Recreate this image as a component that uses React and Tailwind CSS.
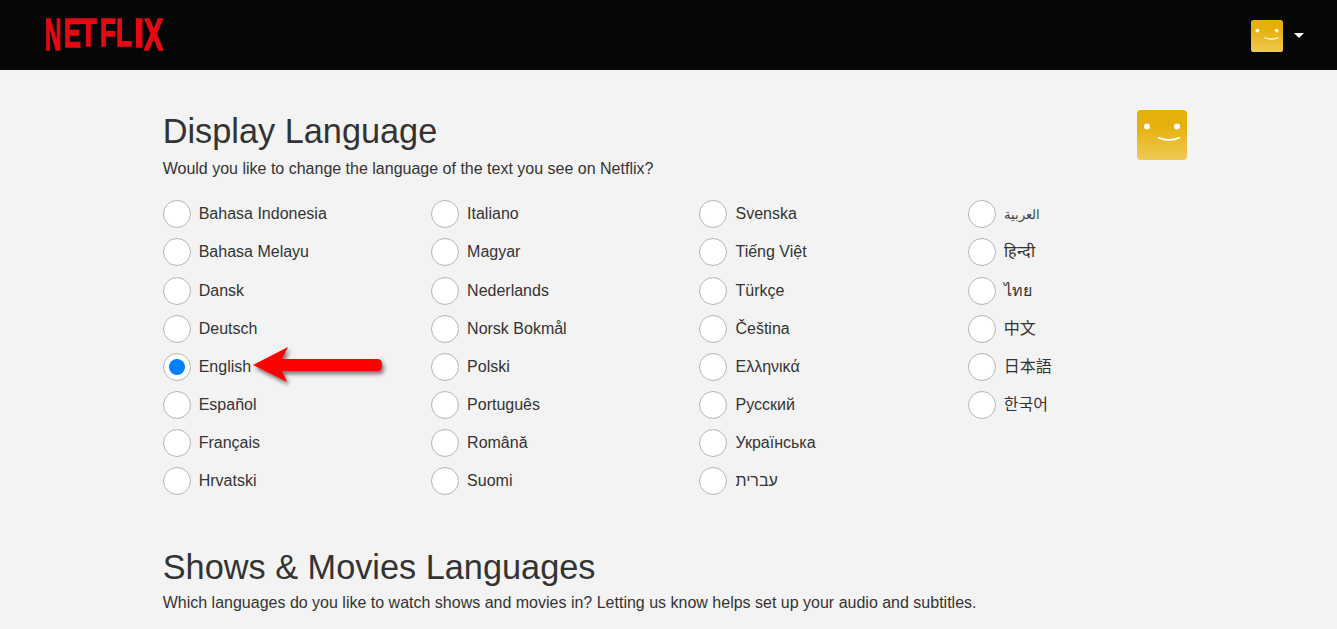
const columns = [
  ["Bahasa Indonesia", "Bahasa Melayu", "Dansk", "Deutsch", "English", "Español", "Français", "Hrvatski"],
  ["Italiano", "Magyar", "Nederlands", "Norsk Bokmål", "Polski", "Português", "Română", "Suomi"],
  ["Svenska", "Tiếng Việt", "Türkçe", "Čeština", "Ελληνικά", "Русский", "Українська", "עברית"],
  ["العربية", "हिन्दी", "ไทย", "中文", "日本語", "한국어"],
];

function Avatar({ size, id }) {
  return (
    <svg width={size} height={size} viewBox="0 0 50 50" className="block shrink-0">
      <defs>
        <linearGradient id={id} x1="0" y1="0" x2="0" y2="1">
          <stop offset="0.3" stopColor="#e6b00a" />
          <stop offset="1" stopColor="#efc956" />
        </linearGradient>
      </defs>
      <rect width="50" height="50" rx="4" fill={`url(#${id})`} />
      <circle cx="10" cy="16.5" r="3" fill="#fff" />
      <circle cx="40" cy="16.5" r="3" fill="#fff" />
      <path d="M21 27.500 Q32 32.500 43 27.500" fill="none" stroke="#fff" strokeWidth="1.8" />
    </svg>
  );
}

function Radio({ label, checked }) {
  return (
    <div className="flex h-[38.14px] items-center gap-2">
      <span className="flex h-7 w-7 shrink-0 items-center justify-center rounded-full border border-[#b5b5b5] bg-white">
        {checked && <span className="block h-4 w-4 rounded-full bg-[#0080ff]" />}
      </span>
      <span className={label === "العربية" ? "text-[13px] text-[#444]" : "text-base text-[#333]"}>{label}</span>
    </div>
  );
}

const letters = [
  { c: "N", box: "w-[16px]", t: "[transform:scale(0.52,1.02)]" },
  { c: "E", box: "ml-[3px] w-[14px]", t: "[transform:scale(0.58,0.94)]" },
  { c: "T", box: "ml-[2px] w-[16px]", t: "[transform:scale(0.62,0.89)]" },
  { c: "F", box: "ml-[4px] w-[13px]", t: "[transform:scale(0.6,0.89)]" },
  { c: "L", box: "ml-[3px] w-[14px]", t: "[transform:scale(0.6,0.89)]" },
  { c: "I", box: "ml-[3.5px] w-[7px]", t: "[transform:scale(0.85,0.93)]" },
  { c: "X", box: "ml-[3.5px] w-[19px]", t: "[transform:scale(0.66,1.02)]" },
];

function Logo() {
  return (
    <div className="-mt-[2px] flex text-[44px] leading-none font-bold text-[#e50914] [-webkit-text-stroke:1.5px_#e50914]">
      {letters.map(({ c, box, t }) => (
        <span key={c} className={`block ${box}`}>
          <span className={`block origin-[0_6px] ${t}`}>{c}</span>
        </span>
      ))}
    </div>
  );
}

export default function App() {
  return (
    <div className="relative h-[629px] overflow-hidden bg-[#f3f3f3] font-['Liberation_Sans','Noto_Sans_CJK_SC',sans-serif]">
      <header className="flex h-[70px] items-center justify-between bg-[#060606] pr-[33px] pl-[45px]">
        <Logo />
        <div className="mt-[1px] flex items-center gap-[11px]">
          <Avatar size={32} id="avatar-small" />
          <span className="block h-0 w-0 border-x-[5px] border-t-[5px] border-x-transparent border-t-white" />
        </div>
      </header>

      <main className="ml-[162.7px] w-[1024.300px] pt-[40px]">
        <div className="flex items-start justify-between">
          <div>
            <h1 className="-mt-[1px] mb-[1px] text-[34.3px] leading-[44px] text-[#333]">Display Language</h1>
            <p className="mt-[6px] text-base leading-[20px] text-[#333]">
              Would you like to change the language of the text you see on Netflix?
            </p>
          </div>
          <Avatar size={50} id="avatar-large" />
        </div>

        <div className="mt-[16.2px] grid grid-cols-[268.4px_268.4px_268.4px_1fr]">
          {columns.map((col, i) => (
            <div key={i}>
              {col.map((label) => (
                <Radio key={label} label={label} checked={label === "English"} />
              ))}
            </div>
          ))}
        </div>

        <h2 className="mt-[45px] mb-[1px] text-[34.3px] leading-[44px] text-[#333]">Shows &amp; Movies Languages</h2>
        <p className="mt-[4px] text-base leading-[20px] text-[#333]">
          Which languages do you like to watch shows and movies in? Letting us know helps set up your audio and subtitles.
        </p>
      </main>

      <svg className="absolute top-[340px] left-[245px]" width="150" height="55" viewBox="245 340 150 55">
        <defs>
          <filter id="arrow-shadow" x="-20%" y="-30%" width="140%" height="170%">
            <feDropShadow dx="2" dy="3" stdDeviation="2" floodColor="#000" floodOpacity="0.55" />
          </filter>
        </defs>
        <path
          d="M253 365 L288 347 L282 359 L378 359 Q382 359 382 365 Q382 371 378 371 L282 371 L287 382 Z"
          fill="#ff0000"
          filter="url(#arrow-shadow)"
        />
      </svg>
    </div>
  );
}
